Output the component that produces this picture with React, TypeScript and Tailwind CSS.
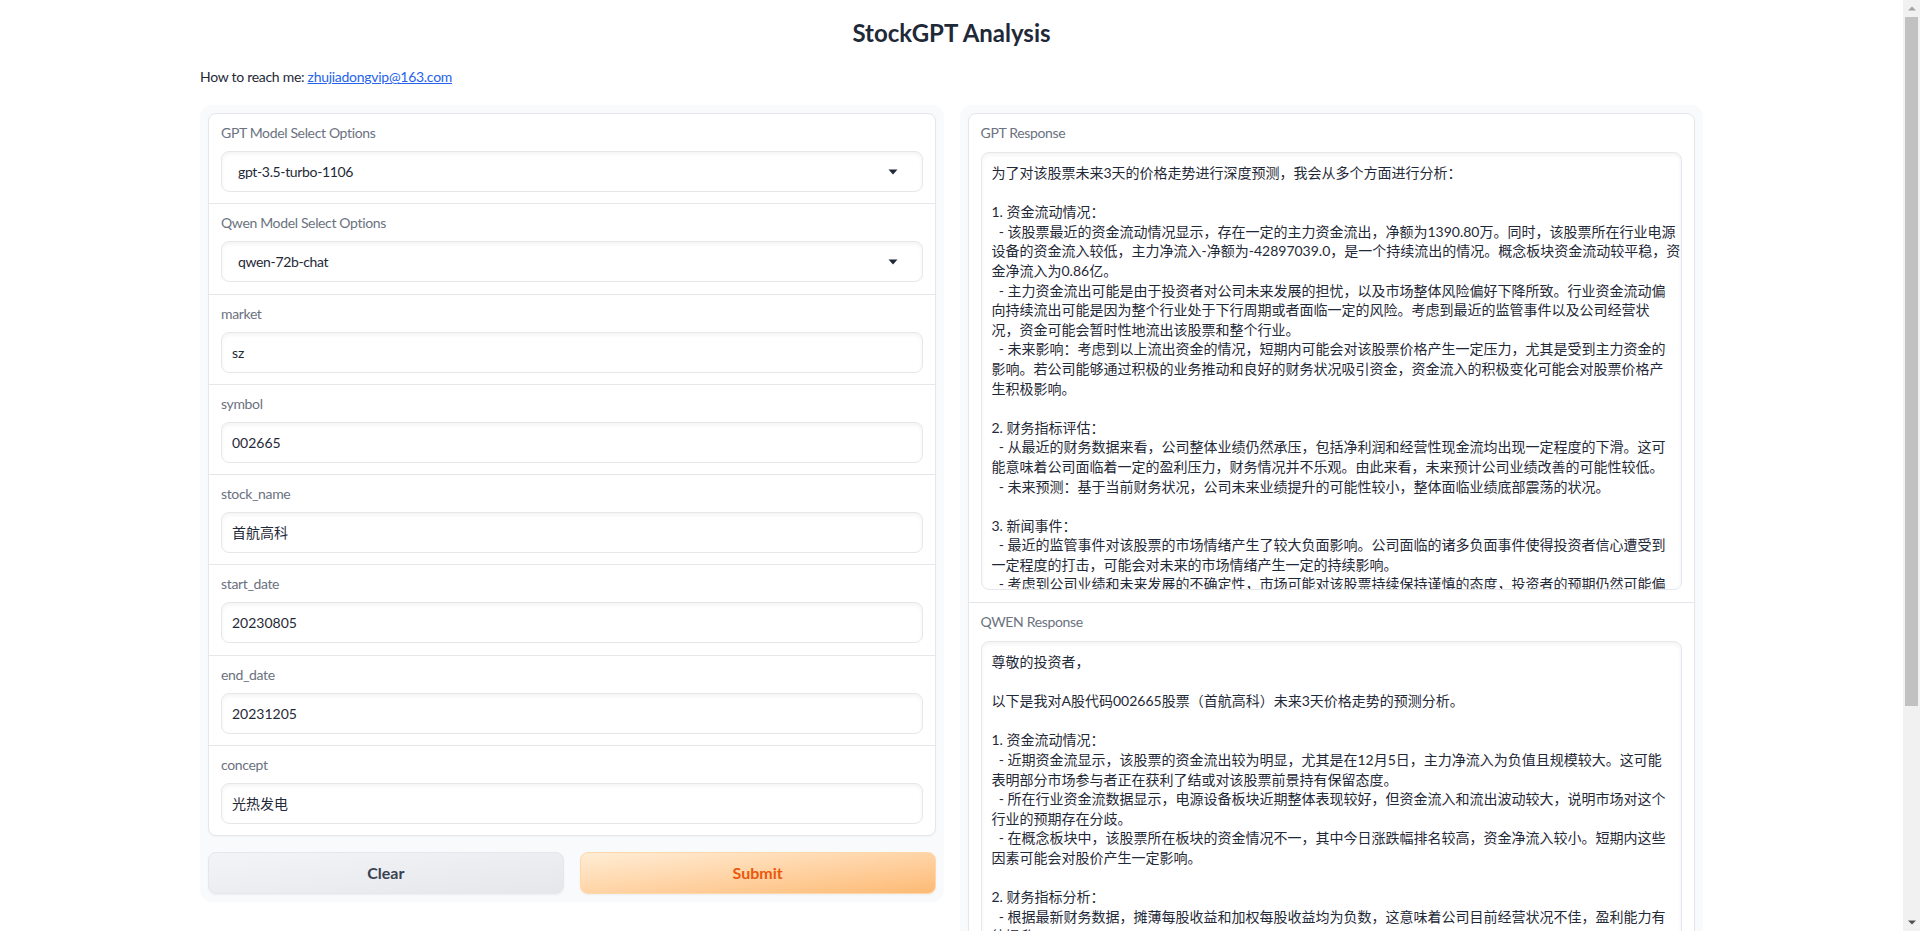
import React from "react";

const gptLines = [
  "为了对该股票未来3天的价格走势进行深度预测，我会从多个方面进行分析：",
  "",
  "1. 资金流动情况：",
  "  - 该股票最近的资金流动情况显示，存在一定的主力资金流出，净额为1390.80万。同时，该股票所在行业电源",
  "设备的资金流入较低，主力净流入-净额为-42897039.0，是一个持续流出的情况。概念板块资金流动较平稳，资",
  "金净流入为0.86亿。",
  "  - 主力资金流出可能是由于投资者对公司未来发展的担忧，以及市场整体风险偏好下降所致。行业资金流动偏",
  "向持续流出可能是因为整个行业处于下行周期或者面临一定的风险。考虑到最近的监管事件以及公司经营状",
  "况，资金可能会暂时性地流出该股票和整个行业。",
  "  - 未来影响：考虑到以上流出资金的情况，短期内可能会对该股票价格产生一定压力，尤其是受到主力资金的",
  "影响。若公司能够通过积极的业务推动和良好的财务状况吸引资金，资金流入的积极变化可能会对股票价格产",
  "生积极影响。",
  "",
  "2. 财务指标评估：",
  "  - 从最近的财务数据来看，公司整体业绩仍然承压，包括净利润和经营性现金流均出现一定程度的下滑。这可",
  "能意味着公司面临着一定的盈利压力，财务情况并不乐观。由此来看，未来预计公司业绩改善的可能性较低。",
  "  - 未来预测：基于当前财务状况，公司未来业绩提升的可能性较小，整体面临业绩底部震荡的状况。",
  "",
  "3. 新闻事件：",
  "  - 最近的监管事件对该股票的市场情绪产生了较大负面影响。公司面临的诸多负面事件使得投资者信心遭受到",
  "一定程度的打击，可能会对未来的市场情绪产生一定的持续影响。",
  "  - 考虑到公司业绩和未来发展的不确定性，市场可能对该股票持续保持谨慎的态度，投资者的预期仍然可能偏",
  "向悲观。",
];

const qwenLines = [
  "尊敬的投资者，",
  "",
  "以下是我对A股代码002665股票（首航高科）未来3天价格走势的预测分析。",
  "",
  "1. 资金流动情况：",
  "  - 近期资金流显示，该股票的资金流出较为明显，尤其是在12月5日，主力净流入为负值且规模较大。这可能",
  "表明部分市场参与者正在获利了结或对该股票前景持有保留态度。",
  "  - 所在行业资金流数据显示，电源设备板块近期整体表现较好，但资金流入和流出波动较大，说明市场对这个",
  "行业的预期存在分歧。",
  "  - 在概念板块中，该股票所在板块的资金情况不一，其中今日涨跌幅排名较高，资金净流入较小。短期内这些",
  "因素可能会对股价产生一定影响。",
  "",
  "2. 财务指标分析：",
  "  - 根据最新财务数据，摊薄每股收益和加权每股收益均为负数，这意味着公司目前经营状况不佳，盈利能力有",
  "待提升。",
];

function Label({ children }: { children: React.ReactNode }) {
  return <div className="h-5 text-[14px] leading-5 tracking-[-0.025em] text-[#6b7280]">{children}</div>;
}

function Arrow() {
  return (
    <svg width="10" height="6" viewBox="0 0 10 6" className="shrink-0">
      <path d="M0.5 0.5 L9.5 0.5 L5 5.5 Z" fill="#1f2937" />
    </svg>
  );
}

function SelectBlock({ label, value }: { label: string; value: string }) {
  return (
    <div className="flex flex-col gap-2 px-3 pt-[9px] pb-[11.25px]">
      <Label>{label}</Label>
      <div className="flex h-[41px] items-center justify-between rounded-lg border border-[#e5e7eb] bg-white pl-[16px] pr-[24px] text-[14px] tracking-[-0.025em] text-[#1f2937] shadow-[inset_0_2px_4px_rgba(0,0,0,0.05)]">
        <span>{value}</span>
        <Arrow />
      </div>
    </div>
  );
}

function InputBlock({ label, value }: { label: string; value: string }) {
  return (
    <div className="flex flex-col gap-2 px-3 pt-[9px] pb-[11.25px]">
      <Label>{label}</Label>
      <div className="flex h-[41px] items-center rounded-lg border border-[#e5e7eb] bg-white px-[10px] text-[14px] text-[#1f2937] shadow-[inset_0_2px_4px_rgba(0,0,0,0.05)]">
        {value}
      </div>
    </div>
  );
}

function TextBlock({ label, lines, h }: { label: string; lines: string[]; h: string }) {
  return (
    <div className="flex flex-col gap-[9px] px-3 pt-[9px] pb-[12px]">
      <Label>{label}</Label>
      <div
        className={`${h} overflow-hidden whitespace-pre rounded-lg border border-[#e5e7eb] bg-white px-[10px] pt-[10px] text-[14px] leading-[19.6px] text-[#1f2937] shadow-[inset_0_2px_4px_rgba(0,0,0,0.05)]`}
      >
        {lines.join("\n")}
      </div>
    </div>
  );
}

function Scrollbar() {
  return (
    <div className="fixed right-0 top-0 flex h-screen w-[17px] flex-col items-center bg-[#f1f1f1]">
      <div className="flex h-[17px] w-full items-center justify-center">
        <svg width="8" height="5" viewBox="0 0 8 5">
          <path d="M0 4.5 L4 0.5 L8 4.5 Z" fill="#a3a3a3" />
        </svg>
      </div>
      <div className="h-[689px] w-[13px] bg-[#c1c1c1]" />
      <div className="flex-1" />
      <div className="flex h-[17px] w-full items-center justify-center">
        <svg width="8" height="5" viewBox="0 0 8 5">
          <path d="M0 0.5 L8 0.5 L4 4.5 Z" fill="#505050" />
        </svg>
      </div>
    </div>
  );
}

export default function App() {
  return (
    <div className="min-h-screen bg-white pr-[17px] font-['Lato','Noto_Sans_CJK_SC',sans-serif] text-[#1f2937]">
      <div className="mx-auto w-[1503px] pb-[80px]">
        <h1 className="flex h-[66px] items-center justify-center text-[24px] font-bold text-[#1f2937]">
          StockGPT Analysis
        </h1>
        <p className="h-[22px] text-[14px] leading-[22px] tracking-[-0.02em] text-[#1f2937]">
          How to reach me:{" "}
          <a href="#" className="text-[#2563eb] underline">
            zhujiadongvip@163.com
          </a>
        </p>
        <div className="mt-[17px] grid grid-cols-2 items-start gap-4">
          <div className="flex flex-col gap-4 rounded-xl bg-[#f9fafb] p-2">
            <div className="divide-y divide-[#e5e7eb] rounded-lg border border-[#e5e7eb] bg-white shadow-[0_1px_2px_rgba(0,0,0,0.04)]">
              <SelectBlock label="GPT Model Select Options" value="gpt-3.5-turbo-1106" />
              <SelectBlock label="Qwen Model Select Options" value="qwen-72b-chat" />
              <InputBlock label="market" value="sz" />
              <InputBlock label="symbol" value="002665" />
              <InputBlock label="stock_name" value="首航高科" />
              <InputBlock label="start_date" value="20230805" />
              <InputBlock label="end_date" value="20231205" />
              <InputBlock label="concept" value="光热发电" />
            </div>
            <div className="grid grid-cols-2 gap-4">
              <button className="h-[42px] rounded-lg border border-[#e5e7eb] bg-linear-to-br from-[#f3f4f6] to-[#e5e7eb] text-[16px] font-bold text-[#374151] shadow-[0_1px_2px_rgba(0,0,0,0.05)]">
                Clear
              </button>
              <button className="h-[42px] rounded-lg border border-[#fed7aa] bg-linear-to-br from-[#ffedd5] to-[#fdba74] text-[16px] font-bold text-[#ea580c] shadow-[0_1px_2px_rgba(0,0,0,0.05)]">
                Submit
              </button>
            </div>
          </div>
          <div className="rounded-xl bg-[#f9fafb] p-2">
            <div className="divide-y divide-[#e5e7eb] rounded-lg border border-[#e5e7eb] bg-white shadow-[0_1px_2px_rgba(0,0,0,0.04)]">
              <TextBlock label="GPT Response" lines={gptLines} h="h-[438px]" />
              <TextBlock label="QWEN Response" lines={qwenLines} h="h-[470px]" />
            </div>
          </div>
        </div>
      </div>
      <Scrollbar />
    </div>
  );
}
